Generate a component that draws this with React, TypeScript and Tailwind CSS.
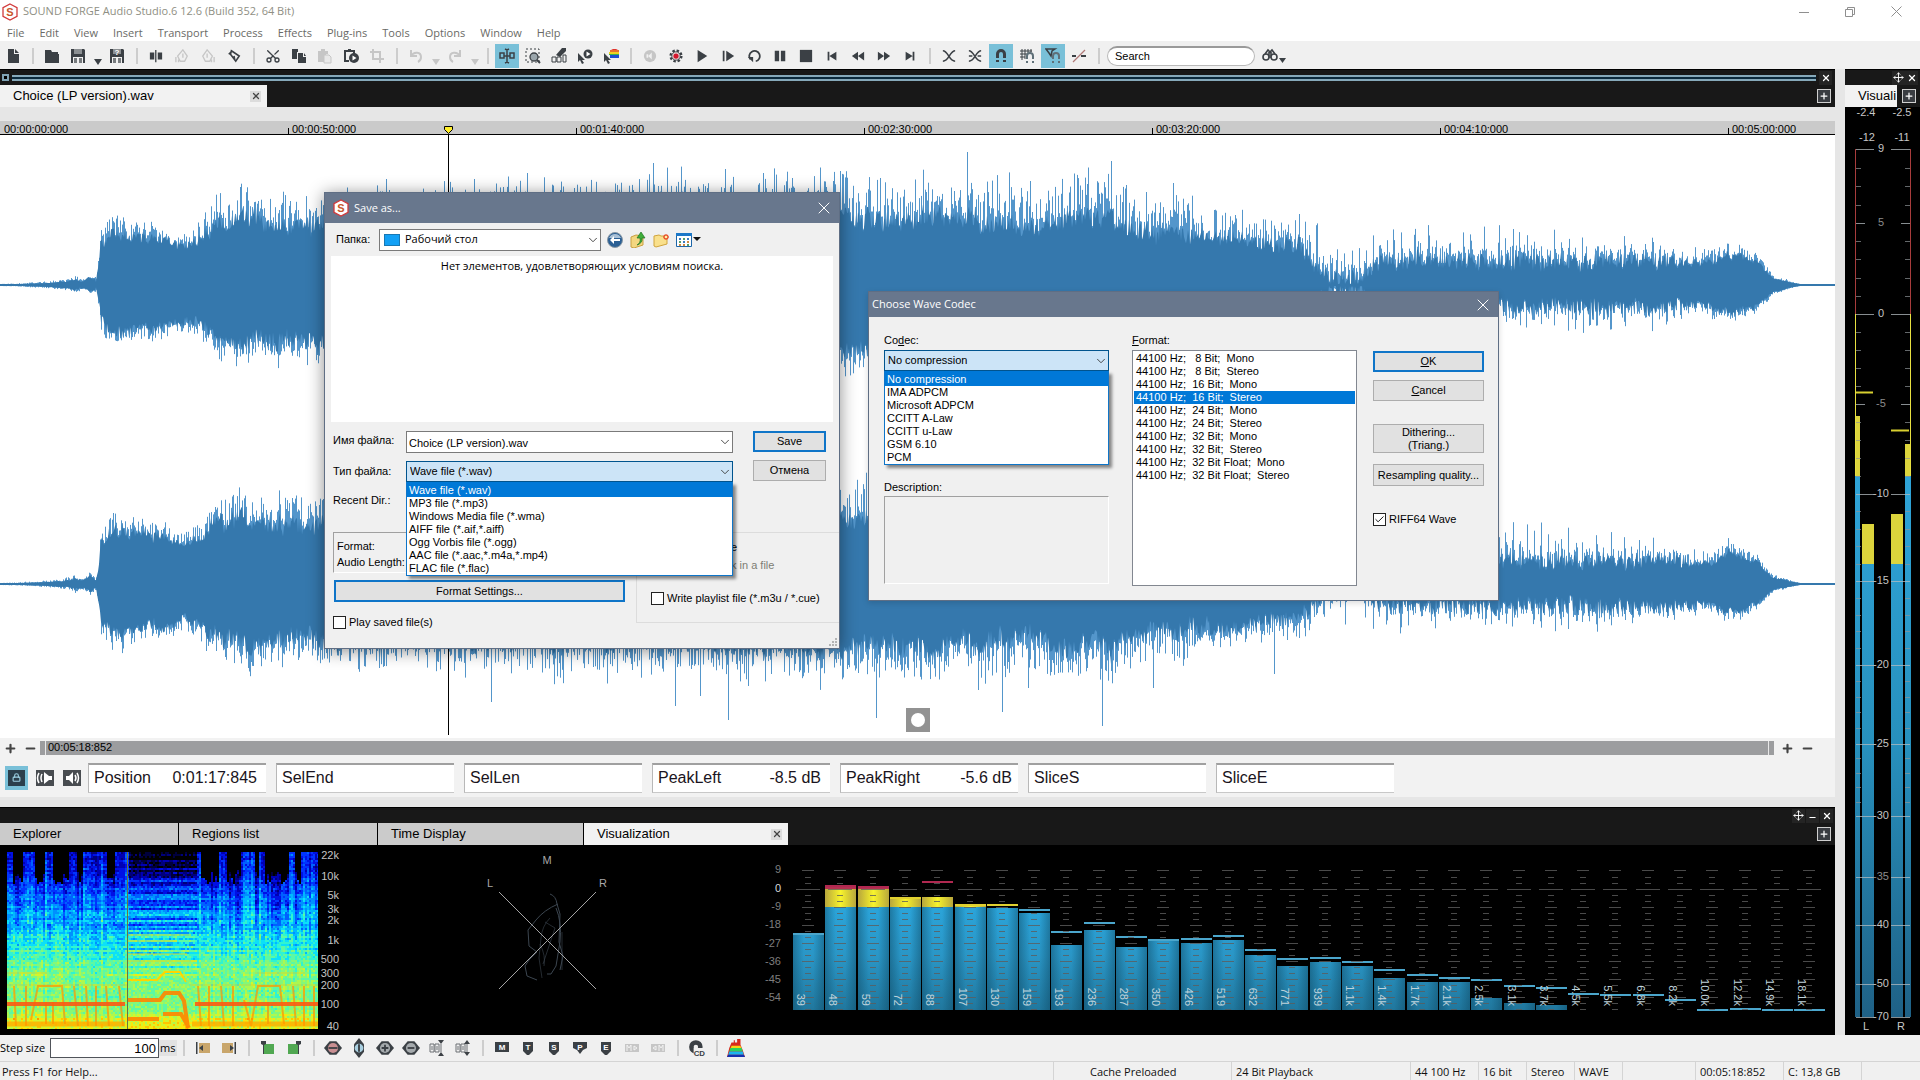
import React from "react";
import { Check, ChevronDown, Lock, Plus, Minus, Move, Scissors, X } from "lucide-react";

type Kids = { children?: React.ReactNode };

const INK = "#3b4045";
const OFF = "#c6c6c6";

// Small seeded generator so the drawings are the same on every render
function rng(seed: number) {
  let s = seed;
  return () => {
    s = (s * 1664525 + 1013904223) % 4294967296;
    return s / 4294967296;
  };
}

function lerpTable(table: number[][], x: number, col: number) {
  for (let i = 1; i < table.length; i++) {
    if (x <= table[i][0]) {
      const a = table[i - 1];
      const b = table[i];
      const t = (x - a[0]) / (b[0] - a[0]);
      return a[col] + (b[col] - a[col]) * t;
    }
  }
  return table[table.length - 1][col];
}

/* ---------- Icons ---------- */

function Ico({ children, size = 16 }: Kids & { size?: number }) {
  return (
    <svg width={size} height={size} viewBox="0 0 16 16" fill={INK} aria-hidden="true">
      {children}
    </svg>
  );
}

function Logo() {
  return (
    <svg width="18" height="18" viewBox="0 0 18 18" aria-hidden="true">
      <path d="M9 1l7 3.6v8.800L9 17l-7-3.6V4.600z" fill="#fff" stroke="#d2393b" strokeWidth="1.300" />
      <text x="9" y="13" textAnchor="middle" fontSize="11" fontWeight="700" fill="#c9552a" fontFamily="Liberation Sans, sans-serif">
        S
      </text>
    </svg>
  );
}

const floppy = (
  <>
    <path d="M1 1h13l1 1v13H1z" />
    <path d="M4 1h8v5H4z" fill="#8b8f92" />
    <path d="M3 9h10v6H3z" fill="#f0f0f0" />
    <path d="M4 10h3v5H4zM9 10h3v5H9z" fill="#777b7e" />
  </>
);

const magnet = <path d="M3 10V6a5 5 0 0 1 10 0v4h-3V6a2 2 0 0 0-4 0v4zM3 12h3v2H3zM10 12h3v2h-3z" />;
const smallMagnet = <path d="M7 11V8a4 4 0 0 1 8 0v3h-2V8a2 2 0 0 0-4 0v3zM7 13h2v2H7zM13 13h2v2h-2z" fill="#5f7078" />;
const cursorArrow = <path d="M1 5l7 7H5l2 3-2 1-2-4-2 2z" />;

const icons: Record<string, React.ReactNode> = {
  New: <path d="M3 1h6v5h5v9H3zM10 1l4 4h-4z" />,
  Open: <path d="M1 2h6l1 2h6v2H1zM1 6h14v9H1z" />,
  Save: floppy,
  "Save As": (
    <>
      {floppy}
      <text x="8" y="7" textAnchor="middle" fontSize="8" fontWeight="700" fill="#fff" fontFamily="Liberation Sans, sans-serif">
        ?
      </text>
    </>
  ),
  Split: <path d="M1 4h5v8H1zM10 4h5v8h-5zM7 1h1.500v14H7z" />,
  "Marker in": (
    <g fill="none" stroke={OFF} strokeWidth="1.500">
      <path d="M9 1l5 7-3 6H6L3 8zM9 5v5M1 9v6M4 12v3" />
    </g>
  ),
  "Marker out": (
    <g fill="none" stroke={OFF} strokeWidth="1.500">
      <path d="M7 1L2 8l3 6h5l3-6zM7 5v5M15 9v6M12 12v3" />
    </g>
  ),
  Edit: (
    <g fill="none" stroke={INK} strokeWidth="1.800">
      <path d="M5 2l9 6-4 6-6-8zM2 6l4-4M8 8l1 5" />
    </g>
  ),
  Copy: <path d="M1 1h6v3H6v7H1zM8 5h4v4h3v6H7V5zM13 5l2 3h-2z" />,
  Paste: (
    <>
      <path d="M1 3h3V1h4v2h3v3H9v8H1z" fill={OFF} />
      <path d="M7 7h5l2 2v6H7z" fill="#e8e8e8" stroke={OFF} />
    </>
  ),
  "Paste play": (
    <>
      <path d="M1 2h4V1h3v1h4v4h-2V4H3v8h3v2H1z" />
      <circle cx="11" cy="10" r="5" />
      <path d="M9.500 7.500l4 2.500-4 2.500z" fill="#fff" />
    </>
  ),
  Crop: <path d="M4 1v10h11M1 4h10v11" fill="none" stroke={OFF} strokeWidth="2" />,
  Undo: <path d="M3 2v6h6M3 8c3-5 10-4 10 1 0 2-1 4-3 5" fill="none" stroke={OFF} strokeWidth="2" />,
  Redo: <path d="M13 2v6H7M13 8C10 3 3 4 3 9c0 2 1 4 3 5" fill="none" stroke={OFF} strokeWidth="2" />,
  "Edit tool": (
    <g fill="none" stroke={INK} strokeWidth="1.500">
      <path d="M1 5h4v5H1zM11 5h4v5h-4zM8 2v12M6 1l2 1 2-1M6 15l2-1 2 1M5 8h6" />
    </g>
  ),
  "Magnify tool": (
    <>
      <path d="M1 1h13v13H1z" fill="none" stroke={INK} strokeDasharray="2 2" />
      <circle cx="9" cy="9" r="4" fill="#9aa5ab" stroke={INK} strokeWidth="1.300" />
      <path d="M12 12l3 3" stroke={INK} strokeWidth="2" />
    </>
  ),
  "Pencil tool": (
    <>
      <path d="M15 0h-4L5 7l4 2 6-6z" />
      <path d="M1 9h4v5H1zM6 9h4v5H6zM12 7h3v7h-3z" fill="none" stroke={INK} />
    </>
  ),
  "Play tool": (
    <>
      {cursorArrow}
      <circle cx="11" cy="6" r="4.500" />
      <path d="M9.500 3.500l4 2.500-4 2.500z" fill="#fff" />
    </>
  ),
  "Color tool": (
    <>
      {cursorArrow}
      <path d="M8 2l2-1h3l2 1z" fill="#e0342c" />
      <path d="M7 2h9v2H7z" fill="#e8702c" />
      <path d="M6 4h10v2H6z" fill="#f0d020" />
      <path d="M6 6h10v1H6z" fill="#3cb44a" />
      <path d="M7 7h9v3H7z" fill="#1c4fd0" />
    </>
  ),
  Monitor: (
    <>
      <circle cx="8" cy="8" r="7" fill={OFF} />
      <path d="M10 4v8L6 8zM4 6h2v4H4z" fill="#f0f0f0" />
    </>
  ),
  Record: (
    <>
      <circle cx="8" cy="8" r="6" fill="none" stroke={INK} strokeWidth="3" strokeDasharray="2.700 2" />
      <circle cx="8" cy="8" r="4.800" fill="#e9dcdc" stroke={INK} />
      <circle cx="8" cy="8" r="3" fill="#d3182e" />
    </>
  ),
  Play: <path d="M3 1l11 7-11 7z" />,
  "Play all": <path d="M2 2h2v12H2zM6 2l9 6-9 6z" />,
  Loop: (
    <>
      <path d="M4 12a6 6 0 1 1 6 2" fill="none" stroke={INK} strokeWidth="2" />
      <path d="M1 9h6v6z" />
    </>
  ),
  Pause: <path d="M2 2h5v12H2zM9 2h5v12H9z" />,
  Stop: <path d="M1 1h14v14H1z" />,
  "Go to start": <path d="M3 3h2v10H3zM13 3v10L5 8z" />,
  Rewind: <path d="M8 3v10L1 8zM15 3v10L8 8z" />,
  Forward: <path d="M1 3v10l7-5zM8 3v10l7-5z" />,
  "Go to end": <path d="M11 3h2v10h-2zM3 3v10l8-5z" />,
  Crossfade: <path d="M1 2c6 0 7 12 14 12M15 2C9 2 8 14 1 14" fill="none" stroke={INK} strokeWidth="1.800" />,
  "Crossfade loop": <path d="M1 2c6 0 7 12 14 12M15 2C9 2 8 14 1 14M1 8h4M11 8h4" fill="none" stroke={INK} strokeWidth="1.800" />,
  Snap: magnet,
  "Snap to grid": (
    <>
      <path d="M3 1v11M6 1v10M9 1v4M12 1v3M1 3h12M1 6h7M1 9h5" stroke={INK} fill="none" />
      {smallMagnet}
    </>
  ),
  "Snap to marker": (
    <>
      <path d="M1 1h9l-3 2-1 5-2-3z" fill="none" stroke={INK} strokeWidth="1.500" />
      {smallMagnet}
    </>
  ),
  Slope: (
    <>
      <path d="M1 8h4M10 8h5" stroke={INK} strokeWidth="2" />
      <path d="M2 14L14 2" stroke="#b07a78" strokeWidth="1.300" />
    </>
  ),
  Find: (
    <g fill="none" stroke={INK} strokeWidth="1.600">
      <circle cx="4" cy="9" r="3" />
      <circle cx="12" cy="9" r="3" />
      <path d="M3 6l3-4 2 2 2-2 3 4M7 9h2M7 4v4M9 4v4" />
    </g>
  ),
};

function ToolButton({ name, on, small }: { name: string; on?: boolean; small?: boolean }) {
  return (
    <button
      type="button"
      aria-label={name}
      className={`h-6 w-[24px] mx-px flex items-center justify-center shrink-0 ${on ? "bg-[#79c0d8]" : ""}`}
    >
      {name === "Cut" ? <Scissors size={16} color={INK} className="-rotate-90" /> : <Ico size={small ? 14 : 16}>{icons[name]}</Ico>}
    </button>
  );
}

function DropArrow({ off, name }: { off?: boolean; name: string }) {
  return (
    <button type="button" aria-label={name} className="w-[13px] h-6 flex items-end justify-center pb-[3px] shrink-0">
      <svg width="8" height="6" viewBox="0 0 8 6" aria-hidden="true">
        <path d="M0 0h8L4 6z" fill={off ? OFF : INK} />
      </svg>
    </button>
  );
}

function Sep() {
  return (
    <span className="w-[13px] flex justify-center shrink-0">
      <span className="w-[2px] h-4 bg-[#cdcdcd]" />
    </span>
  );
}

/* ---------- Title, menu, toolbar ---------- */

const menus = ["File", "Edit", "View", "Insert", "Transport", "Process", "Effects", "Plug-ins", "Tools", "Options", "Window", "Help"];

function TitleBar() {
  return (
    <header className="h-[41px] bg-white font-['Open_Sans','Noto_Sans',sans-serif]">
      <div className="h-[23px] flex items-center pl-px">
        <Logo />
        <h1 className="ml-1 flex-1 text-[11px] text-[#8f8f84]">SOUND FORGE Audio Studio.6 12.6 (Build 352, 64 Bit)</h1>
        <div className="flex text-[#8f8f8f]">
          <button type="button" aria-label="Minimize" className="w-[46px] h-5 flex items-center justify-center">
            <svg width="10" height="10" stroke="currentColor" fill="none"><path d="M0 5.500h10" /></svg>
          </button>
          <button type="button" aria-label="Restore" className="w-[45px] h-5 flex items-center justify-center">
            <svg width="10" height="10" stroke="currentColor" fill="none"><path d="M.5 2.500h7v7h-7zM2.500 2.500v-2h7v7h-2" /></svg>
          </button>
          <button type="button" aria-label="Close" className="w-[48px] h-5 flex items-center justify-center">
            <svg width="11" height="11" stroke="currentColor" fill="none"><path d="M.5.5l10 10M10.500.5l-10 10" /></svg>
          </button>
        </div>
      </div>
      <nav className="flex gap-px text-[11px] leading-5 text-[#6a6a66]">
        {menus.map((m) => (
          <button type="button" key={m} className="px-[7px]">
            {m}
          </button>
        ))}
      </nav>
    </header>
  );
}

function Toolbar() {
  return (
    <div className="h-[28px] bg-[#f0f0f0] flex items-center pt-px">
      <ToolButton name="New" />
      <Sep />
      <ToolButton name="Open" />
      <ToolButton name="Save" />
      <DropArrow name="Save options" />
      <ToolButton name="Save As" />
      <Sep />
      {["Split", "Marker in", "Marker out", "Edit"].map((n) => <ToolButton key={n} name={n} small />)}
      <Sep />
      {["Cut", "Copy", "Paste", "Paste play", "Crop"].map((n) => <ToolButton key={n} name={n} />)}
      <Sep />
      <ToolButton name="Undo" />
      <DropArrow off name="Undo history" />
      <ToolButton name="Redo" />
      <DropArrow off name="Redo history" />
      <Sep />
      <ToolButton name="Edit tool" on />
      {["Magnify tool", "Pencil tool", "Play tool", "Color tool"].map((n) => <ToolButton key={n} name={n} />)}
      <Sep />
      {["Monitor", "Record", "Play", "Play all", "Loop", "Pause", "Stop", "Go to start", "Rewind", "Forward", "Go to end"].map((n) => (
        <ToolButton key={n} name={n} small />
      ))}
      <Sep />
      <ToolButton name="Crossfade" small />
      <ToolButton name="Crossfade loop" small />
      <ToolButton name="Snap" on />
      <ToolButton name="Snap to grid" />
      <ToolButton name="Snap to marker" on />
      <ToolButton name="Slope" />
      <Sep />
      <input
        type="text"
        aria-label="Search"
        defaultValue="Search"
        className="ml-[2px] w-[148px] h-5 rounded-full bg-white border border-[#b9b9b9] border-t-2 border-t-[#9a9a9a] px-[7px] text-[11px] text-black"
      />
      <span className="ml-[2px] flex">
        <ToolButton name="Find" />
        <span className="-ml-1 pt-[6px]">
          <svg width="7" height="16" viewBox="0 0 7 16" aria-hidden="true"><path d="M0 8h7l-3.500 5z" fill={INK} /></svg>
        </span>
      </span>
    </div>
  );
}

/* ---------- Window captions ---------- */

function CaptionButton({ name, children }: Kids & { name: string }) {
  return (
    <button type="button" aria-label={name} className="w-[13px] h-[14px] flex items-center justify-center text-white bg-[#242424]">
      {children}
    </button>
  );
}

function PlusButton() {
  return (
    <button type="button" aria-label="Add tab" className="w-[14px] h-[14px] border border-[#d0d0d0] bg-[#3a3d42] text-white flex items-center justify-center shrink-0">
      <Plus size={10} strokeWidth={3} />
    </button>
  );
}

function CloseTab() {
  return (
    <button type="button" aria-label="Close tab" className="w-[11px] h-[11px] bg-[#dcdcdc] text-[#444] flex items-center justify-center">
      <X size={10} strokeWidth={3} />
    </button>
  );
}

/* ---------- Waveform ---------- */

// x, solid height, spike height
const envelope = [
  [0, 1, 1], [20, 1, 2], [50, 2, 4], [70, 4, 7], [75, 6, 11], [80, 4, 7], [84, 4, 6], [90, 8, 12], [96, 4, 8],
  [99, 20, 30], [101, 42, 60], [112, 54, 74], [140, 48, 64], [165, 46, 60], [185, 40, 52], [200, 46, 67],
  [215, 60, 86], [245, 64, 94], [300, 62, 90], [324, 64, 94], [420, 62, 100], [650, 64, 108], [850, 68, 108],
  [940, 70, 106], [1000, 60, 108], [1030, 58, 108], [1060, 68, 110], [1111, 68, 112], [1151, 52, 84],
  [1175, 54, 96], [1211, 50, 76], [1266, 40, 64], [1299, 40, 78], [1312, 24, 66], [1325, 9, 56], [1360, 7, 50],
  [1368, 18, 58], [1380, 24, 58], [1450, 25, 60], [1570, 24, 57], [1671, 25, 48], [1702, 20, 32], [1725, 30, 42],
  [1745, 28, 37], [1759, 20, 27], [1773, 7, 10], [1793, 2, 3], [1800, 1, 1], [1835, 1, 1],
];

const longSpikes: number[][] = [
  [386, 106, 0], [474, 106, 0], [653, 122, 0], [725, 116, 0], [763, 112, 0], [840, 114, 0], [967, 133, 0],
  [1111, 124, 0], [1173, 102, 0], [491, 0, 118], [675, 0, 122], [700, 0, 112], [728, 0, 136], [876, 0, 134],
  [978, 0, 106], [1002, 0, 128], [1028, 0, 104], [1102, 0, 142], [1153, 0, 104], [1274, 0, 90],
];

function channelPaths(mid: number, seed: number, useUp: boolean) {
  const r = rng(seed);
  let light = "";
  let top = "";
  const bottom: string[] = [];
  let slowUp = 0;
  let slowDn = 0;
  for (let x = 0; x <= 1835; x += 1) {
    const body = lerpTable(envelope, x, 1);
    const spike = lerpTable(envelope, x, 2);
    slowUp = slowUp * 0.78 + (r() - 0.5) * 0.26;
    slowDn = slowDn * 0.78 + (r() - 0.5) * 0.26;
    const quiet = body < 3;
    const room = spike - body;
    const rough = Math.min(18, room * 0.6);
    const up = quiet ? body : Math.max(1, body * (1 + slowUp * 0.5) + (r() - 0.55) * rough);
    const dn = quiet ? body : Math.max(1, body * (0.92 + slowDn * 0.5) + (r() - 0.55) * rough);
    top += `${x ? "L" : "M"}${x} ${(mid - up).toFixed(1)}`;
    bottom.push(`L${x} ${(mid + dn).toFixed(1)}`);
    // In the thin middle part the spikes follow the beat
    const thin = x > 1305 && x < 1700;
    const beat = thin ? (x % 7 < 2 ? (x % 14 < 7 ? 1 : 0.75) : 0.25) : 1;
    const power = thin ? 1 : 1.8;
    const lu = up + room * Math.pow(r(), power) * beat;
    const ld = dn + room * 0.75 * Math.pow(r(), power) * beat;
    light += `M${x}.5 ${(mid - lu).toFixed(1)}V${(mid + ld).toFixed(1)}`;
  }
  longSpikes.forEach(([x, up, dn]) => {
    if (useUp && up) light += `M${x}.5 ${mid}V${mid - up}`;
    if (!useUp && dn) light += `M${x}.5 ${mid}V${mid + dn}`;
  });
  return { light, body: top + bottom.reverse().join("") + "Z" };
}

const channels = [channelPaths(285, 7, true), channelPaths(584, 91, false)];

function Waveform() {
  return (
    <svg viewBox="0 135 1835 603" preserveAspectRatio="none" className="block w-full flex-1 min-h-[603px] bg-white" role="img" aria-label="Waveform">
      {channels.map((c, i) => (
        <g key={i}>
          <path d={c.light} stroke="#5496cb" strokeWidth="1" fill="none" />
          <path d={c.body} fill="#3578ad" />
        </g>
      ))}
      <path d="M0 285h1835M0 584h1835" stroke="#3578ad" strokeWidth="2" />
      <path d="M448.500 135v600" stroke="#000" />
      <path d="M906 708h24v24h-24z" fill="#929292" />
      <circle cx="918" cy="720" r="7" fill="#fff" />
    </svg>
  );
}

const rulerMarks = ["00:00:00:000", "00:00:50:000", "00:01:40:000", "00:02:30:000", "00:03:20:000", "00:04:10:000", "00:05:00:000"];

function Ruler() {
  return (
    <div className="relative h-[14px] bg-[#cacaca] border-b border-black flex overflow-hidden text-[11px] leading-[10px] text-black">
      {rulerMarks.map((m, i) => (
        <div key={m} className="w-[288px] shrink-0 flex items-end">
          <span className={`w-px h-[6px] ${i ? "bg-black" : ""}`} />
          <span className="pl-[3px]">{m}</span>
        </div>
      ))}
      <svg width="9" height="8" className="absolute left-[444px] bottom-0" aria-hidden="true">
        <path d="M.5.5h8v3l-4 4-4-4z" fill="#ffee2a" stroke="#000" />
      </svg>
    </div>
  );
}

function ScrollRow() {
  return (
    <div className="h-[20px] bg-[#f2f2f2] flex items-center text-[#444]">
      <button type="button" aria-label="Zoom in height" className="w-5 flex justify-center"><Plus size={13} strokeWidth={4} /></button>
      <button type="button" aria-label="Zoom out height" className="w-5 flex justify-center"><Minus size={13} strokeWidth={4} /></button>
      <div className="flex-1 h-[14px] bg-[#9c9d9f] flex justify-between text-[11px] leading-[13px] text-black">
        <span className="ml-[5px] border-l border-[#e8e8e8] pl-[2px]">00:05:18:852</span>
        <span className="mr-[5px] w-px bg-[#e8e8e8]" />
      </div>
      <div className="w-[61px] flex pl-[3px]">
        <button type="button" aria-label="Zoom in time" className="w-5 flex justify-center"><Plus size={13} strokeWidth={4} /></button>
        <button type="button" aria-label="Zoom out time" className="w-5 flex justify-center"><Minus size={13} strokeWidth={4} /></button>
      </div>
    </div>
  );
}

const fields = [
  ["Position", "0:01:17:845"],
  ["SelEnd", ""],
  ["SelLen", ""],
  ["PeakLeft", "-8.5 dB"],
  ["PeakRight", "-5.6 dB"],
  ["SliceS", ""],
  ["SliceE", ""],
];

function DataRow() {
  return (
    <div className="h-[39px] bg-[#f2f2f2] flex items-center pl-[5px] text-[16px] text-[#1a1420]">
      <button type="button" aria-label="Lock" className="w-[23px] h-6 bg-[#79c0d8] flex items-center justify-center">
        <span className="w-[17px] h-4 bg-[#2b3f4c] flex items-center justify-center"><Lock size={9} color="#9cd0e2" strokeWidth={3} /></span>
      </button>
      {["Scrub", "Volume"].map((n, i) => (
        <button type="button" key={n} aria-label={n} className={`h-4 w-[18px] bg-[#484c50] ${i ? "ml-[9px]" : "ml-2"}`}>
          <svg width="18" height="16" viewBox="0 0 18 16" aria-hidden="true">
            {i ? (
              <>
                <path d="M3 6h3l4-4v12l-4-4H3z" fill="#fff" />
                <path d="M12 5q2 3 0 6M14 3q3 5 0 10" stroke="#fff" fill="none" strokeWidth="1.500" />
              </>
            ) : (
              <>
                <path d="M8 2l5 4h3v4h-3l-5 4z" fill="#fff" />
                <path d="M6 4q-2 4 0 8M3 3q-3 5 0 10" stroke="#fff" fill="none" strokeWidth="1.500" />
              </>
            )}
          </svg>
        </button>
      ))}
      <div className="ml-[7px] flex gap-[10px]">
        {fields.map(([name, value]) => (
          <label key={name} className="w-[178px] h-[30px] bg-white border-t-2 border-t-[#a0a0a0] border-b border-b-[#c8c8c8] border-l border-l-[#b8b8b8] flex items-center justify-between pl-[5px] pr-[9px]">
            {name}
            <input type="text" readOnly defaultValue={value} className="w-[92px] text-right bg-transparent" />
          </label>
        ))}
      </div>
    </div>
  );
}

function EditorWindow() {
  return (
    <section className="flex-1 flex flex-col">
      <div className="h-4 bg-[#181818] border-t border-black flex items-center pl-[2px]">
        <span className="w-[7px] h-[7px] border-2 border-[#7fa3b5] bg-black" />
        <span className="ml-[3px] flex-1 h-[6px] border-y-2 border-[#86a9ba] bg-[#0b2a3d]" />
        <span className="w-[19px] flex justify-center"><CaptionButton name="Close window"><X size={10} strokeWidth={3} /></CaptionButton></span>
      </div>
      <div className="h-[22px] bg-[#181818] flex items-center justify-between pr-1">
        <div className="w-[267px] h-full bg-[#f2f2f2] flex items-center justify-between pl-[13px] pr-[6px] text-[13px] text-black">
          Choice (LP version).wav
          <CloseTab />
        </div>
        <PlusButton />
      </div>
      <div className="h-[14px] bg-[#e6e6e6]" />
      <Ruler />
      <Waveform />
      <ScrollRow />
      <DataRow />
    </section>
  );
}

/* ---------- Spectrogram ---------- */

const jet = [
  "#000000", "#00003c", "#00007c", "#0000b4", "#0010e4", "#0034ff", "#0060ff", "#0090ff", "#00b8ff",
  "#0ce0f8", "#30f4d0", "#5cf8a4", "#84f878", "#acf850", "#d4f42c", "#f8e80c", "#ffc400", "#ff9800", "#ff6c00",
];

const loudness = [
  [0, 0.16], [0.1, 0.21], [0.2, 0.28], [0.33, 0.38], [0.42, 0.44], [0.5, 0.5], [0.58, 0.58], [0.68, 0.65],
  [0.78, 0.66], [0.9, 0.66], [0.94, 0.78], [1, 0.84],
];

const beats = [[0, 4], [15, 27], [38, 44], [62, 69], [75, 98], [108, 120], [187, 193], [211, 219], [234, 246], [252, 257], [281, 287], [293, 311]];

function spectrogramPaths() {
  const r = rng(33);
  const out = jet.map(() => "");
  const cols = Array.from({ length: 156 }, () => r());
  const rows = Array.from({ length: 89 }, () => r());
  for (let j = 0; j < 89; j++) {
    const t = j / 88;
    for (let i = 0; i < 156; i++) {
      const x = i * 2;
      const solo = x > 120 && x < 190;
      const inBeat = beats.some(([a, b]) => x >= a && x <= b);
      let v = lerpTable(loudness, t, 1) + (r() - 0.5) * 0.14;
      if (solo) {
        v += t < 0.7 ? (rows[j] - 0.55) * 0.24 - Math.max(0, 0.16 - t) * 1.2 : 0;
      } else {
        v += (cols[i] - 0.5) * (t < 0.5 ? 0.16 : 0.1) + (rows[j] - 0.5) * 0.08;
        if (t < 0.4) v += inBeat ? 0.06 : -0.04;
        if (!inBeat && t < 0.1 + cols[i] * 0.08) v = 0;
      }
      const k = Math.max(0, Math.min(jet.length - 1, Math.round(v * (jet.length - 1))));
      out[k] += `M${7 + x} ${852 + j * 2}h2v2h-2z`;
    }
  }
  return out;
}

const specPaths = spectrogramPaths();

const specLabels: [string, number][] = [
  ["22k", 855], ["10k", 876], ["5k", 895], ["3k", 909], ["2k", 920], ["1k", 940], ["500", 959], ["300", 973],
  ["200", 985], ["100", 1004], ["40", 1026],
];

function Spectrogram() {
  return (
    <svg width="345" height="190" viewBox="0 845 345 190" className="shrink-0" role="img" aria-label="Spectrogram">
      <clipPath id="spec"><path d="M7 852h311v177H7z" /></clipPath>
      <g clipPath="url(#spec)">
        <g shapeRendering="crispEdges">
          {specPaths.map((d, i) => <path key={i} d={d} fill={jet[i]} />)}
        </g>
        <g fill="none" stroke="#ffd400" strokeWidth="1" opacity=".8">
          <path d="M127 935h64M127 954h60M127 961h70M127 941h50M7 985h120M190 985h128M7 973h40M255 973h50" />
        </g>
        <path d="M7 1024h118M192 1024h126" stroke="#ffae00" strokeWidth="5" opacity=".8" />
        <path
          d="M14 986l2 40M26 986v40M31 1020l7-34h24l3 38M46 1002v22M53 1002v22M74 986l4 40M86 986l2 40M96 986v40M106 986l3 40M119 986l4 40M198 986l3 40M209 986v40M221 986l3 40M233 986v40M244 1000l7 26 7-40h22l4 38M268 1002v22M293 986l3 40M304 986v40M314 986v40"
          fill="none"
          stroke="#ff9800"
          strokeWidth="2"
          opacity=".75"
        />
        <path d="M7 1004h118M195 1004h123" stroke="#ff5a10" strokeWidth="4" opacity=".9" />
        <path d="M127 1000h33l5-7h14l5 8 4 27M127 1019h32M163 1014h18l8 14" fill="none" stroke="#ff8400" strokeWidth="4" opacity=".9" />
        <path d="M127 980h30l8-8h15l6 10" fill="none" stroke="#ffd400" strokeWidth="2" />
        <path d="M127.500 852v177" stroke="#6a7440" />
      </g>
      {specLabels.map(([label, y]) => (
        <text key={label} x="339" y={y + 4} textAnchor="end" fontSize="11" fill="#c4c4c4">
          {label}
        </text>
      ))}
    </svg>
  );
}

function PhaseScope() {
  return (
    <svg width="415" height="190" viewBox="345 845 415 190" className="shrink-0" role="img" aria-label="Phase scope">
      <g fontSize="11" fill="#a8a8a8" textAnchor="middle">
        <text x="547" y="864">M</text>
        <text x="490" y="887">L</text>
        <text x="603" y="887">R</text>
      </g>
      <g fill="none" stroke="#3c4650" strokeWidth="1">
        <path d="M550 894q6 2 7 10l3 10-1 28 4 14-3 14M558 904q-14 6-22 16l-8 10 1 16 8 6-8 8-4 6 2 10 10 4" />
        <path d="M556 908q6 14 4 34l-4 24-5 8h-4" />
        <path d="M550 918q-8 8-9 20l-2 20 3 20M545 922l10 6-12 36M562 932v38M540 944q6 12 4 22" opacity=".6" />
      </g>
      <path d="M499 892l97 97M596 892l-97 97" stroke="#a4a4a4" />
    </svg>
  );
}

// label, top of bar, peak line
const bands: [string, number, number][] = [
  ["39", 934, 933], ["48", 885, 885], ["59", 886, 886], ["72", 898, 897], ["88", 897, 881], ["107", 906, 904],
  ["130", 908, 904], ["159", 913, 909], ["193", 945, 931], ["236", 930, 922], ["287", 947, 936], ["350", 941, 939],
  ["426", 943, 938], ["519", 940, 935], ["632", 955, 949], ["771", 966, 958], ["939", 962, 957], ["1.1k", 966, 961],
  ["1.4k", 978, 969], ["1.7k", 982, 974], ["2.1k", 982, 977], ["2.5k", 998, 979], ["3.1k", 1003, 985],
  ["3.7k", 1005, 987], ["4.5k", 1010, 993], ["5.5k", 1010, 994], ["6.8k", 1010, 994], ["8.2k", 1010, 999],
  ["10.0k", 1010, 1009], ["12.2k", 1010, 1008], ["14.9k", 1010, 1009], ["18.1k", 1010, 1009],
];

const dbLabels: [string, number][] = [["9", 869], ["0", 888], ["-9", 906], ["-18", 924], ["-27", 943], ["-36", 961], ["-45", 979], ["-54", 997]];

function SpectrumBars() {
  return (
    <div className="flex-1 h-[190px]">
      <svg width="1075" height="190" viewBox="760 845 1075 190" role="img" aria-label="Spectrum">
        <defs>
          <linearGradient id="bar" gradientUnits="userSpaceOnUse" x1="0" y1="900" x2="0" y2="1012">
            <stop offset="0" stopColor="#2ba6dc" />
            <stop offset=".5" stopColor="#2a96c6" />
            <stop offset="1" stopColor="#20769c" />
          </linearGradient>
          <linearGradient id="hot">
            <stop offset="0" stopColor="#b8a63c" />
            <stop offset=".5" stopColor="#f8f42c" />
            <stop offset="1" stopColor="#b8a63c" />
          </linearGradient>
          <linearGradient id="edge">
            <stop offset="0" stopColor="#0e4660" stopOpacity=".45" />
            <stop offset=".35" stopColor="#0e4660" stopOpacity="0" />
            <stop offset=".65" stopColor="#0e4660" stopOpacity="0" />
            <stop offset="1" stopColor="#0e4660" stopOpacity=".45" />
          </linearGradient>
        </defs>
        {dbLabels.map(([label, y]) => (
          <text key={label} x="781" y={y + 4} textAnchor="end" fontSize="11" fill={label === "0" ? "#d8d8d8" : "#7e7e7e"}>
            {label}
          </text>
        ))}
        {bands.map(([label, top, peak], i) => {
          const x = 793 + Math.round(i * 32.3);
          const peakColor = peak < 889 ? "#b02850" : peak < 907 ? "#e0d030" : "#4ba6cc";
          const blueTop = Math.max(top, 907);
          return (
            <g key={label}>
              {top < 1010 && <rect x={x} y={blueTop} width="31" height={1010 - blueTop} fill="url(#bar)" />}
              {top < 1010 && <rect x={x} y={blueTop} width="31" height={1010 - blueTop} fill="url(#edge)" />}
              {top < 907 && <rect x={x} y={Math.max(top, 889)} width="31" height={907 - Math.max(top, 889)} fill="url(#hot)" />}
              {top < 889 && <rect x={x} y={top} width="31" height={889 - top} fill="#b43050" />}
              <rect x={x} y={peak} width="31" height="2" fill={peakColor} />
              {Array.from({ length: 24 }, (_, k) => {
                const half = k === 3 ? 12 : k % 3 === 0 ? 6 : 3;
                return <rect key={k} x={x + 15 - half} y={870 + k * 6 + (k > 0 ? 1 : 0)} width={half * 2} height="1" fill="#5c5c5c" opacity=".8" />;
              })}
              <text transform={`translate(${x + 4} 1006) rotate(90)`} textAnchor="end" fontSize="11" fill="#c0d4dc">
                {label}
              </text>
            </g>
          );
        })}
      </svg>
    </div>
  );
}

const dockTabs: [string, string][] = [
  ["Explorer", "w-[179px]"],
  ["Regions list", "w-[199px]"],
  ["Time Display", "w-[206px]"],
];

function Dock() {
  return (
    <section className="bg-black">
      <div className="h-4 bg-[#181818] border-t border-black flex items-center justify-end pr-[2px] gap-px">
        <CaptionButton name="Move"><Move size={11} /></CaptionButton>
        <CaptionButton name="Collapse"><Minus size={9} strokeWidth={3} className="mt-1" /></CaptionButton>
        <CaptionButton name="Close dock"><X size={10} strokeWidth={3} /></CaptionButton>
      </div>
      <div className="h-[22px] bg-[#181818] flex items-center pr-1 text-[13px] text-black" role="tablist">
        {dockTabs.map(([name, w]) => (
          <button type="button" role="tab" key={name} className={`${w} h-full bg-[#cbcbcb] border-r border-black text-left pl-[13px]`}>
            {name}
          </button>
        ))}
        <div className="w-[204px] h-full bg-[#f2f2f2] flex items-center justify-between pl-[13px] pr-[6px]" role="tab" aria-selected="true">
          Visualization
          <CloseTab />
        </div>
        <span className="flex-1" />
        <PlusButton />
      </div>
      <div className="flex">
        <Spectrogram />
        <PhaseScope />
        <SpectrumBars />
      </div>
    </section>
  );
}

/* ---------- Level meters ---------- */

const meterMarks: [string, number][] = [
  ["9", 149], ["5", 223], ["0", 314], ["-5", 404], ["-10", 494], ["-15", 581], ["-20", 665], ["-25", 744],
  ["-30", 816], ["-35", 877], ["-40", 925], ["-50", 984], ["-70", 1017],
];

function Meters() {
  const minor: number[] = [];
  for (let i = 1; i < 9; i++) {
    const a = meterMarks[i - 1][1];
    const b = meterMarks[i][1];
    const n = i === 1 ? 4 : 5;
    for (let k = 1; k < n; k++) minor.push(Math.round(a + ((b - a) * k) / n));
  }
  return (
    <svg width="75" height="928" viewBox="1845 107 75 928" className="bg-black" role="img" aria-label="Level meters">
      <defs>
        <linearGradient id="lvl" gradientUnits="userSpaceOnUse" x1="0" y1="476" x2="0" y2="1017">
          <stop offset="0" stopColor="#2fa4d8" />
          <stop offset=".5" stopColor="#2790bd" />
          <stop offset="1" stopColor="#1f6186" />
        </linearGradient>
      </defs>
      <g fontSize="11" fill="#c8c8c8" textAnchor="middle">
        <text x="1866" y="116">-2.4</text>
        <text x="1902" y="116">-2.5</text>
        <text x="1867" y="141">-12</text>
        <text x="1902" y="141">-11</text>
        <text x="1866" y="1030">L</text>
        <text x="1901" y="1030">R</text>
      </g>
      <path d="M1855.500 149v165M1910.500 149v165" stroke="#a83c3c" />
      <path d="M1855.500 314v166M1910.500 314v166" stroke="#e8e040" />
      <path d="M1856 416h4v60h-4zM1905 444h5v32h-5zM1862 524h12v40h-12zM1891 514h12v50h-12z" fill="#dcd43c" />
      <path d="M1855 476h5v541h-5zM1905 476h6v541h-6zM1862 564h12v453h-12zM1891 564h12v453h-12z" fill="url(#lvl)" />
      <path d="M1856 392.500h17M1891 430.500h18" stroke="#d8d030" strokeWidth="2" />
      {minor.map((y) => <path key={y} d={`M1856 ${y}.5h5M1905 ${y}.5h5`} stroke="#8f9598" opacity=".7" />)}
      {meterMarks.map(([label, y]) => (
        <g key={label}>
          <path
            d={y === 149 || y === 314 || y > 404 ? `M1856 ${y}.5h18M1891 ${y}.5h19` : `M1856 ${y}.5h9M1901 ${y}.5h9`}
            stroke="#b4bcc0"
            opacity=".75"
          />
          <text x="1881" y={y + 3} textAnchor="middle" fontSize="11" fill={y === 223 || y === 404 || y === 877 ? "#8c8c8c" : "#c4c4c4"}>
            {label}
          </text>
        </g>
      ))}
    </svg>
  );
}

function MeterPanel() {
  return (
    <aside className="w-[75px] bg-black shrink-0">
      <div className="h-4 bg-[#181818] border-t border-black flex items-center justify-end pr-[2px]">
        <CaptionButton name="Move meters"><Move size={11} /></CaptionButton>
        <CaptionButton name="Close meters"><X size={10} strokeWidth={3} /></CaptionButton>
      </div>
      <div className="h-[22px] bg-[#181818] flex items-center justify-between pr-1">
        <div className="w-[52px] h-full bg-[#f2f2f2] pl-[13px] text-[13px] leading-[21px] text-black">Visuali</div>
        <PlusButton />
      </div>
      <Meters />
    </aside>
  );
}

/* ---------- Bottom bars ---------- */

function Badge({ letter, shape = "M1 2h14v10H1z" }: { letter: string; shape?: string }) {
  return (
    <Ico size={16}>
      <path d={shape} />
      <text x="8" y="10" textAnchor="middle" fontSize="8" fontWeight="700" fill="#fff" fontFamily="Liberation Sans, sans-serif">
        {letter}
      </text>
    </Ico>
  );
}

const eye = (fill: string, inner: string) => (
  <Ico size={18}>
    <path d="M0 8l5-6h6l5 6-5 6H5z" />
    <circle cx="8" cy="8" r="4.500" fill={fill} />
    <path d={inner} stroke={INK} strokeWidth="1.600" />
  </Ico>
);

const shield = "M3 2h10v9l-4 4H7l-4-4z";
const boxed = (arrow: string) => (
  <Ico>
    <path d="M1 4h4v8H1zM6 4h4v8H6z" fill="none" stroke="#6c7074" />
    <path d="M3 6v4M8 6v4M12 4v8" stroke="#6c7074" />
    <path d={arrow} />
  </Ico>
);

const bottomTools: [string, React.ReactNode][] = [
  ["Mark in", <Ico><path d="M4 3h11v10H4z" fill="#c9a66b" /><path d="M1 2h1.500v12H1zM8 5v6L4 8z" /></Ico>],
  ["Mark out", <Ico><path d="M1 3h11v10H1z" fill="#c9a66b" /><path d="M13.500 2H15v12h-1.500zM9 5v6l4-3z" /></Ico>],
  ["-", null],
  ["Region in", <Ico><path d="M4 4h10v10H4z" fill="#51a852" /><path d="M1 1h5v3L4 5v9H3V5L1 4z" /></Ico>],
  ["Region out", <Ico><path d="M2 4h10v10H2z" fill="#51a852" /><path d="M10 1h5v3l-2 1v9h-1V5l-2-1z" /></Ico>],
  ["-", null],
  ["Zoom selection", eye("#c98f92", "M4 8h8")],
  ["Zoom out full", <Ico size={20}><path d="M8 0l4 5v6l-4 5-4-5V5z" /><circle cx="8" cy="8" r="3.500" fill="#a9cfe0" /><path d="M8 5v6" stroke={INK} strokeWidth="1.500" /></Ico>],
  ["Zoom in", eye("#a5aaad", "M5 8h6M8 5v6")],
  ["Zoom out", eye("#a5aaad", "M5 8h6")],
  ["Shrink", boxed("M9 0h6l-3 4zM9 16h6l-3-4z")],
  ["Grow", boxed("M9 4h6l-3-4zM9 12h6l-3 4z")],
  ["-", null],
  ["Marker", <Badge letter="M" />],
  ["Tempo", <Badge letter="T" shape={shield} />],
  ["Sample", <Badge letter="S" shape={shield} />],
  ["Playlist", <Badge letter="P" shape="M1 2h14v6l-4 2-3 4-3-4-4-2z" />],
  ["End", <Badge letter="E" shape={shield} />],
  ["Next marker", <Ico><path d="M1 4h14v8H1z" fill={OFF} /><path d="M3 11V5l2 3 2-3v6M10 6v4l3-2z" stroke="#f2f2f2" fill="none" /></Ico>],
  ["Previous marker", <Ico><path d="M1 4h14v8H1z" fill={OFF} /><path d="M9 11V5l2 3 2-3v6M6 6v4L3 8z" stroke="#f2f2f2" fill="none" /></Ico>],
  ["-", null],
  [
    "Disc",
    <Ico size={18}>
      <circle cx="7" cy="7" r="4" fill="none" stroke={INK} strokeWidth="4" />
      <path d="M5 8h11v8H5z" fill="#f0f0f0" />
      <text x="5" y="15" fontSize="7" fontWeight="700" fontFamily="Liberation Sans, sans-serif">CD</text>
    </Ico>,
  ],
  ["-", null],
  [
    "Spectrum",
    <Ico size={18}>
      <path d="M4 3h2V1h1v2h2V0h3v5l2 5 2 6H0l2-8z" fill="#d8281c" />
      <path d="M4 6h8l1 3H3z" fill="#f8d414" />
      <path d="M3 8h10l1 3H2z" fill="#2cd05c" />
      <path d="M2 11h12l1 3H1z" fill="#18b4f0" />
      <path d="M1 14h14l1 2H0z" fill="#1430b0" />
    </Ico>,
  ],
];

function BottomToolbar() {
  return (
    <div className="h-[26px] bg-[#f0f0f0] flex items-center text-[11px] text-black">
      <label htmlFor="step" className="w-[50px] font-['Open_Sans',sans-serif] whitespace-nowrap">Step size</label>
      <input id="step" type="text" defaultValue="100" className="w-[109px] h-5 bg-white border border-[#50545a] pr-[2px] text-right text-[13px]" />
      <span className="w-[18px] h-4 bg-[#e2e2e2] px-px leading-4 font-['Open_Sans',sans-serif]">ms</span>
      <Sep />
      {bottomTools.map(([name, icon], i) =>
        name === "-" ? (
          <Sep key={i} />
        ) : (
          <button type="button" key={name} aria-label={name} className="w-[26px] h-6 flex items-center justify-center shrink-0">
            {icon}
          </button>
        )
      )}
    </div>
  );
}

const status: [string, string][] = [
  ["Cache Preloaded", "w-[178px] pl-9"],
  ["24 Bit Playback", "w-[179px] pl-1"],
  ["44 100 Hz", "w-[68px] pl-1"],
  ["16 bit", "w-[48px] pl-1"],
  ["Stereo", "w-[48px] pl-1"],
  ["WAVE", "w-[48px] pl-1"],
  ["", "w-[73px]"],
  ["00:05:18:852", "w-[88px] pl-1"],
  ["C: 13,8 GB", "w-[78px] pl-1"],
  ["", "w-[59px]"],
];

function StatusBar() {
  return (
    <footer className="h-[19px] bg-[#f0f0f0] border-t border-[#d4d4d4] flex text-[11px] leading-5 text-[#111] font-['Open_Sans','Noto_Sans',sans-serif] whitespace-nowrap">
      <span className="flex-1 pl-[2px]">Press F1 for Help...</span>
      {status.map(([text, cls], i) => (
        <span key={i} className={`${cls} border-l border-[#d4d4d4]`}>
          {text}
        </span>
      ))}
    </footer>
  );
}

/* ---------- Dialogs ---------- */

function PushButton({ children, primary, className = "" }: Kids & { primary?: boolean; className?: string }) {
  return (
    <button
      type="button"
      className={`bg-[#e1e1e1] text-center leading-[13px] ${primary ? "border-2 border-[#0f75c8]" : "border border-[#adadad]"} ${className}`}
    >
      {children}
    </button>
  );
}

function ListPopup({ items, label }: { items: string[]; label: string }) {
  return (
    <ul role="listbox" aria-label={label} className="absolute z-10 left-0 right-0 top-full bg-white border border-t-0 border-[#0f75c8] leading-[13px] shadow-[3px_3px_3px_rgba(0,0,0,0.45)]">
      {items.map((t, i) => (
        <li key={t} role="option" aria-selected={i === 0} className={`pl-[2px] whitespace-nowrap ${i === 0 ? "bg-[#0078d7] text-white pt-[2px]" : ""}`}>
          {t}
        </li>
      ))}
    </ul>
  );
}

const fieldChevron = <ChevronDown size={14} strokeWidth={1.500} className="absolute right-px top-[4px] pointer-events-none text-[#333]" />;

function TickBox({ id, label, checked }: { id: string; label: string; checked?: boolean }) {
  return (
    <span className="flex items-center gap-[3px]">
      <span className="relative w-[13px] h-[13px]">
        <input id={id} type="checkbox" defaultChecked={checked} className="block appearance-none w-[13px] h-[13px] bg-white border border-[#222]" />
        {checked && <Check size={11} className="absolute left-px top-px pointer-events-none" />}
      </span>
      <label htmlFor={id}>{label}</label>
    </span>
  );
}

const fileTypes = ["Wave file (*.wav)", "MP3 file (*.mp3)", "Windows Media file (*.wma)", "AIFF file (*.aif,*.aiff)", "Ogg Vorbis file (*.ogg)", "AAC file (*.aac,*.m4a,*.mp4)", "FLAC file (*.flac)"];

function SaveDialog() {
  return (
    <div role="dialog" aria-label="Save as..." className="absolute left-[324px] top-[192px] w-[516px] h-[457px] bg-[#f0f0f0] border border-[#5f6e84] text-[11px] text-black shadow-[0_2px_16px_rgba(0,0,0,0.45)] flex flex-col">
      <div className="h-[30px] bg-[#68778d] flex items-center pl-[7px] pr-[5px] text-white font-['Open_Sans',sans-serif]">
        <Logo />
        <h2 className="ml-1 flex-1">Save as...</h2>
        <button type="button" aria-label="Close" className="w-5 h-5">
          <X size={20} strokeWidth={1.200} />
        </button>
      </div>
      <div className="flex items-center h-[33px] pl-[11px]">
        <label htmlFor="folder" className="w-[43px]">Папка:</label>
        <div className="relative w-[222px]">
          <select id="folder" className="block w-full h-[22px] appearance-none bg-white border border-[#7a7a7a] pl-[25px] font-['Open_Sans','Noto_Sans',sans-serif]">
            <option>Рабочий стол</option>
          </select>
          <span className="absolute left-[5px] top-[5px] w-4 h-3 bg-[#12a0f5] border border-[#1878b4] pointer-events-none" />
          {fieldChevron}
        </div>
        <div className="flex items-center gap-[7px] ml-[6px]">
          <button type="button" aria-label="Back">
            <Ico>
              <circle cx="8" cy="8" r="7.500" fill="#2a5f94" stroke="#8b99a5" />
              <path d="M2 6a6.500 6.500 0 0 1 12 0z" fill="#a9c0d6" />
              <path d="M7 4L3 8l4 4V9h6V7H7z" fill="#fff" />
            </Ico>
          </button>
          <button type="button" aria-label="Up one level">
            <Ico>
              <path d="M1 5l5-2 7 1v9l-9 3-3-1z" fill="#f3d680" stroke="#c9a040" />
              <path d="M7 13q4-2 3-7H7l4-6 4 6h-3q1 5-5 7z" fill="#3fae3a" stroke="#1f7424" strokeWidth=".7" />
            </Ico>
          </button>
          <button type="button" aria-label="New folder">
            <Ico>
              <path d="M1 4l5-1 2 1h6v8L3 15l-2-1z" fill="#f9e08c" stroke="#d0a43c" />
              <path d="M13 2v6M10 5h6M11 3l4 4M15 3l-4 4" stroke="#e8502c" strokeWidth="1.300" />
              <circle cx="13" cy="5" r="1.300" fill="#fff0a0" />
            </Ico>
          </button>
          <button type="button" aria-label="View" className="flex items-center">
            <Ico>
              <path d="M.5 1.500h15v13H.5z" fill="#fff" stroke="#1c66a8" />
              <path d="M0 1h16v3H0z" fill="#1c78c8" />
              <path d="M3 6h2v2H3zM11 6h2v2h-2zM7 9h2v2H7z" fill="#3a7cc0" />
              <path d="M7 6h2v2H7zM3 9h2v2H3zM11 12h2v2h-2z" fill="#56a068" />
              <path d="M11 9h2v2h-2zM3 12h2v2H3zM7 12h2v2H7z" fill="#d08a40" />
            </Ico>
            <svg width="9" height="5" aria-hidden="true"><path d="M1 0h8L5 4z" fill="#111" /></svg>
          </button>
        </div>
      </div>
      <p className="mx-[6px] h-[166px] bg-white text-center leading-5 font-['Open_Sans','Noto_Sans',sans-serif]">Нет элементов, удовлетворяющих условиям поиска.</p>
      <div className="pl-2 pr-[13px] pt-[9px] flex">
        <div className="flex-1 flex flex-col gap-2">
          <div className="flex items-center">
            <label htmlFor="file" className="w-[73px] pb-1">Имя файла:</label>
            <div className="relative w-[327px]">
              <input id="file" type="text" defaultValue="Choice (LP version).wav" className="block w-full h-[22px] bg-white border border-[#7a7a7a] pl-[2px] pt-px" />
              {fieldChevron}
            </div>
          </div>
          <div className="flex items-center">
            <label htmlFor="type" className="w-[73px]">Тип файла:</label>
            <div className="relative w-[327px]">
              <select id="type" className="block w-full h-[21px] appearance-none bg-[#cce4f7] border border-[#00548e] pl-[3px]">
                <option>Wave file (*.wav)</option>
              </select>
              {fieldChevron}
              <ListPopup items={fileTypes} label="File types" />
            </div>
          </div>
          <span className="leading-[20px]">Recent Dir.:</span>
        </div>
        <div className="w-[73px] flex flex-col gap-2">
          <PushButton primary className="h-[21px]">Save</PushButton>
          <PushButton className="h-[21px]">Отмена</PushButton>
        </div>
      </div>
      <div className="flex pl-2 pt-[22px]">
        <div className="w-[303px]">
          <div className="h-[41px] w-[293px] border-t border-l border-[#a0a0a0] border-b border-b-white pl-[3px] pt-[5px] leading-[16px]">
            <div>Format:</div>
            <div>Audio Length:</div>
          </div>
          <PushButton primary className="ml-px mt-[7px] mb-[12px] h-[22px] w-[291px] block">Format Settings...</PushButton>
          <TickBox id="play" label="Play saved file(s)" />
        </div>
        <div className="flex-1 h-[91px] border border-r-0 border-[#dcdcdc] pl-[14px]">
          <div className="pl-[53px] pt-[5px] leading-[18px]">
            <div className="pl-[27px]">e</div>
            <div className="pl-[27px] text-[#7d7d74]">k in a file</div>
          </div>
          <div className="pt-[16px]">
            <TickBox id="playlist" label="Write playlist file (*.m3u / *.cue)" />
          </div>
        </div>
      </div>
      <svg width="10" height="10" className="mt-auto self-end mr-px mb-px" fill="#b4b4b4" aria-hidden="true">
        <path d="M7 1h2v2H7zM7 4h2v2H7zM4 4h2v2H4zM7 7h2v2H7zM4 7h2v2H4zM1 7h2v2H1z" />
      </svg>
    </div>
  );
}

const codecs = ["No compression", "IMA ADPCM", "Microsoft ADPCM", "CCITT A-Law", "CCITT u-Law", "GSM 6.10", "PCM"];
const formats = [
  "44100 Hz;   8 Bit;  Mono",
  "44100 Hz;   8 Bit;  Stereo",
  "44100 Hz;  16 Bit;  Mono",
  "44100 Hz;  16 Bit;  Stereo",
  "44100 Hz;  24 Bit;  Mono",
  "44100 Hz;  24 Bit;  Stereo",
  "44100 Hz;  32 Bit;  Mono",
  "44100 Hz;  32 Bit;  Stereo",
  "44100 Hz;  32 Bit Float;  Mono",
  "44100 Hz;  32 Bit Float;  Stereo",
];

function CodecDialog() {
  return (
    <div role="dialog" aria-label="Choose Wave Codec" className="absolute left-[868px] top-[291px] w-[631px] h-[310px] bg-[#f0f0f0] border border-[#5f6e84] text-[11px] text-black shadow-[0_2px_6px_rgba(0,0,0,0.15)]">
      <div className="h-[25px] bg-[#68778d] flex items-center pl-[3px] pr-[5px] text-white font-['Open_Sans',sans-serif]">
        <h2 className="flex-1">Choose Wave Codec</h2>
        <button type="button" aria-label="Close" className="w-5 h-5">
          <X size={20} strokeWidth={1.200} />
        </button>
      </div>
      <div className="flex pl-[15px] pt-[14px]">
        <div className="w-[225px]">
          <label htmlFor="codec" className="block h-[19px] leading-[18px]">Co<u>d</u>ec:</label>
          <div className="relative">
            <select id="codec" className="block w-full h-[21px] appearance-none bg-[#cce4f7] border border-[#00548e] pl-[3px]">
              <option>No compression</option>
            </select>
            {fieldChevron}
            <ListPopup items={codecs} label="Codecs" />
          </div>
          <div className="mt-[107px] h-[18px] leading-[18px]">Description:</div>
          <div className="h-[88px] border border-[#a0a0a0] border-r-white border-b-white" />
        </div>
        <div className="ml-[23px] w-[225px]">
          <div className="h-[19px] leading-[18px]"><u>F</u>ormat:</div>
          <ul role="listbox" aria-label="Format" className="h-[236px] bg-white border border-[#828790] p-px leading-[13px] whitespace-pre">
            {formats.map((f, i) => (
              <li key={f} role="option" aria-selected={i === 3} className={`pl-[2px] ${i === 3 ? "bg-[#0078d7] text-white" : ""}`}>
                {f}
              </li>
            ))}
          </ul>
        </div>
        <div className="ml-4 w-[111px] pt-[20px] flex flex-col">
          <PushButton primary className="h-[21px]"><u>O</u>K</PushButton>
          <PushButton className="mt-2 h-[21px]"><u>C</u>ancel</PushButton>
          <PushButton className="mt-[23px] h-[29px]">
            Dithering...
            <br />
            (Triang.)
          </PushButton>
          <PushButton className="mt-[11px] mb-[25px] h-[22px]">Resampling quality...</PushButton>
          <TickBox id="riff" label="RIFF64 Wave" checked />
        </div>
      </div>
    </div>
  );
}

export default function App() {
  return (
    <div className="relative min-h-screen flex flex-col overflow-hidden bg-[#e6e6e6] font-['Liberation_Sans',Arial,sans-serif]">
      <TitleBar />
      <Toolbar />
      <main className="flex-1 flex gap-[10px]">
        <div className="flex-1 min-w-0 flex flex-col gap-[10px]">
          <EditorWindow />
          <Dock />
        </div>
        <MeterPanel />
      </main>
      <BottomToolbar />
      <StatusBar />
      <SaveDialog />
      <CodecDialog />
    </div>
  );
}
